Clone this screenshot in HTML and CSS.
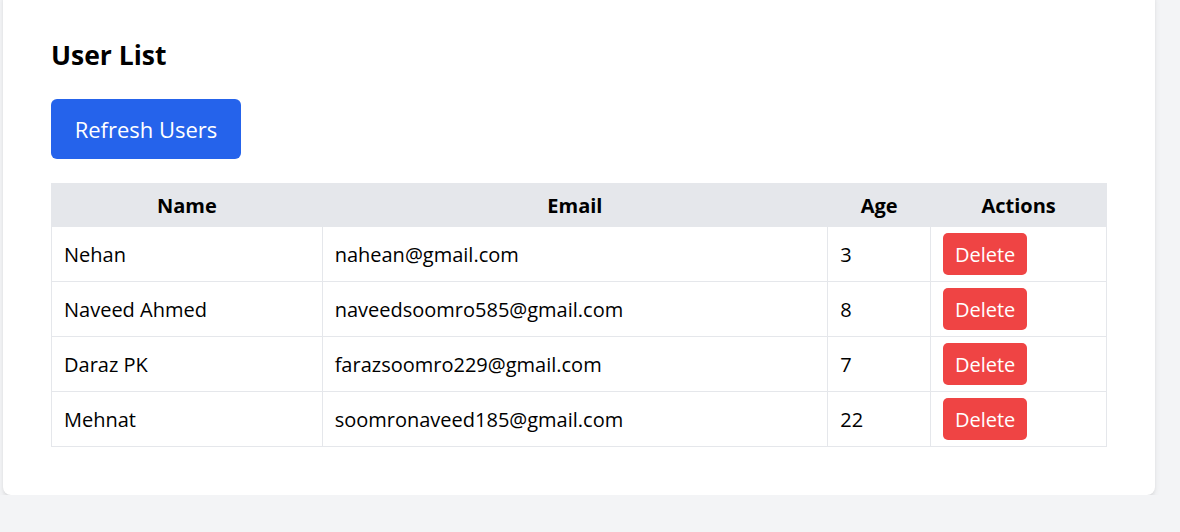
FILE: index.html
```html
<!DOCTYPE html>
<html lang="en">
<head>
<meta charset="utf-8">
<title>User List</title>
<link rel="stylesheet" href="styles.css">
</head>
<body>
<main class="card">
  <h2 class="title">User List</h2>
  <button class="btn-refresh">Refresh Users</button>
  <table class="users">
    <colgroup>
      <col class="c-name"><col class="c-email"><col class="c-age"><col class="c-actions">
    </colgroup>
    <thead>
      <tr><th>Name</th><th>Email</th><th>Age</th><th>Actions</th></tr>
    </thead>
    <tbody>
      <tr><td>Nehan</td><td>nahean@gmail.com</td><td>3</td><td><button class="btn-delete">Delete</button></td></tr>
      <tr><td>Naveed Ahmed</td><td>naveedsoomro585@gmail.com</td><td>8</td><td><button class="btn-delete">Delete</button></td></tr>
      <tr><td>Daraz PK</td><td>farazsoomro229@gmail.com</td><td>7</td><td><button class="btn-delete">Delete</button></td></tr>
      <tr><td>Mehnat</td><td>soomronaveed185@gmail.com</td><td>22</td><td><button class="btn-delete">Delete</button></td></tr>
    </tbody>
  </table>
</main>
</body>
</html>
```
FILE: styles.css
```css
html, body {
  margin: 0;
  padding: 0;
  background: #f3f4f6;
  font-family: "Segoe UI", "Open Sans", "Noto Sans", sans-serif;
  color: #000;
}
.card {
  box-sizing: border-box;
  width: 1152px;
  margin: -10px 0 0 3px;
  padding: 48px 48px 48px 48px;
  background: #fff;
  border-radius: 8px;
  box-shadow: 0 4px 6px -1px rgba(0,0,0,0.1), 0 2px 4px -2px rgba(0,0,0,0.1);
}
.title {
  margin: 0;
  font-size: 26.5px;
  line-height: 34px;
  font-weight: 700;
}
.btn-refresh {
  display: block;
  margin-top: 27px;
  width: 190px;
  height: 60px;
  border: 0;
  border-radius: 6px;
  background: #2563eb;
  color: #fff;
  font-family: inherit;
  font-size: 22px;
  padding: 0;
}
.users {
  margin-top: 24px;
  width: 1056px;
  border-collapse: collapse;
  border: 1px solid #e5e7eb;
  font-size: 20px;
}
.c-name { width: 271px; }
.c-email { width: 506px; }
.c-age { width: 103px; }
.c-actions { width: 176px; }
.users th {
  background: #e5e7eb;
  height: 42px;
  padding: 0 12px;
  font-weight: 700;
  text-align: center;
  border: 1px solid #e5e7eb;
}
.users td {
  border: 1px solid #e5e7eb;
  padding: 6px 12px;
  height: 42px;
  vertical-align: middle;
}
.btn-delete {
  display: block;
  width: 84px;
  height: 42px;
  border: 0;
  border-radius: 5px;
  background: #ef4444;
  color: #fff;
  font-family: inherit;
  font-size: 20px;
  padding: 0;
}
```
